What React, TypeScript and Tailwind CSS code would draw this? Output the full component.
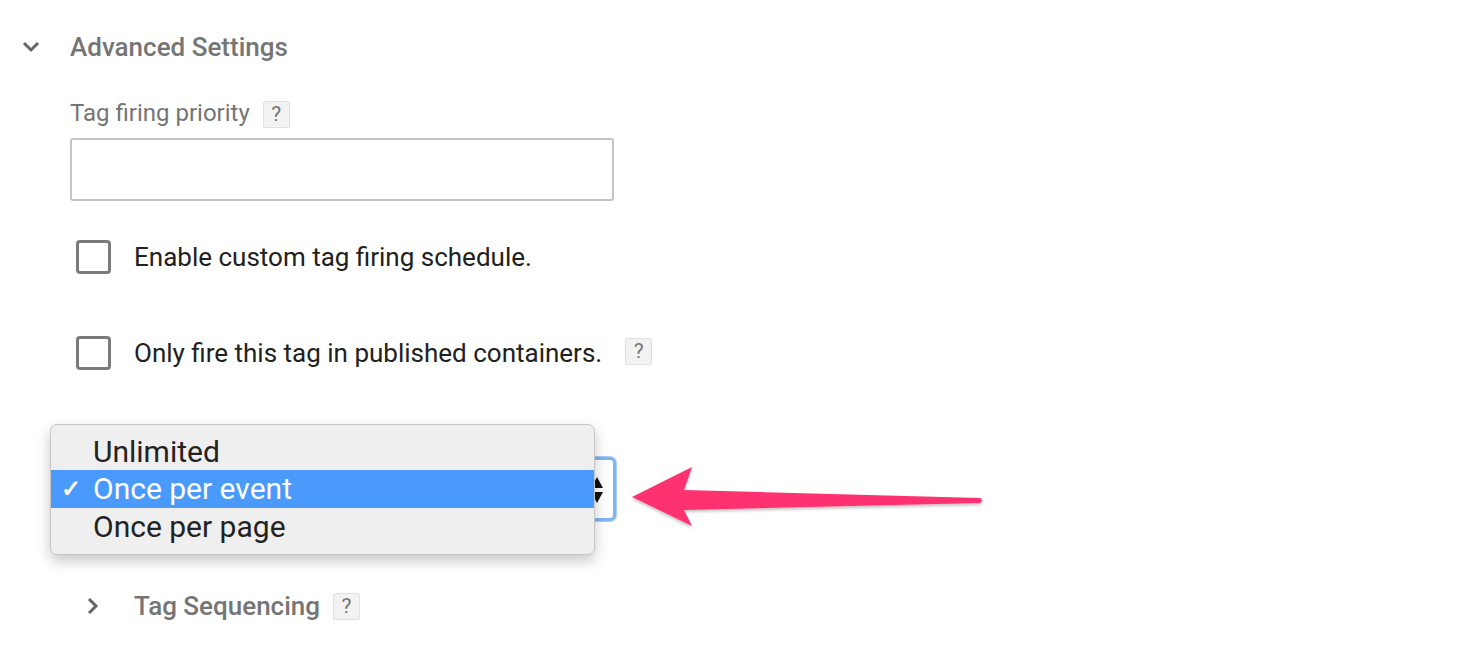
import React from 'react'

const Help = ({ className = '' }: { className?: string }) => (
    <span className={`inline-flex items-center justify-center w-[27px] h-[27px] bg-[#f2f2f2] border border-[#e0e0e0] rounded-[2px] text-[21px] text-[#757575] leading-none ${className}`}>
        ?
    </span>
)

const Checkbox = () => (
    <span className="inline-block w-[35px] h-[34px] border-[3px] border-[#7b7b7b] rounded-[4px] shrink-0" />
)

export default function App() {
    return (
        <div className="w-[1464px] h-[664px] bg-white overflow-hidden font-['Roboto',sans-serif] relative">
            <div className="pt-[33px] pl-[22px]">
                {/* Header */}
                <div className="flex items-center h-[28px]">
                    <svg width="18" height="12" viewBox="0 0 18 12" className="shrink-0">
                        <path d="M2 2 L9 9 L16 2" fill="none" stroke="#666" strokeWidth="3" />
                    </svg>
                    <span className="ml-[30px] text-[26px] font-medium text-[#757575]">Advanced Settings</span>
                </div>

                <div className="pl-[48px]">
                    {/* Tag firing priority */}
                    <div className="flex items-center mt-[37px] h-[30px]">
                        <span className="text-[24px] text-[#757575]">Tag firing priority</span>
                        <Help className="ml-[13px] mt-[3px]" />
                    </div>
                    <div className="mt-[10px] w-[544px] h-[63px] border-2 border-[#c4c4c4] rounded-[3px]" />

                    {/* Checkboxes */}
                    <div className="flex items-center mt-[38px] ml-[6px] h-[36px]">
                        <Checkbox />
                        <span className="ml-[23px] text-[26px] text-[#212121]">Enable custom tag firing schedule.</span>
                    </div>
                    <div className="flex items-center mt-[60px] ml-[6px] h-[36px]">
                        <Checkbox />
                        <span className="ml-[23px] text-[26px] text-[#212121]">Only fire this tag in published containers.</span>
                        <Help className="ml-[23px] -mt-[3px]" />
                    </div>

                    {/* Select with open menu */}
                    <div className="relative mt-[86px] w-[546px] h-[64px] border-[3px] border-[#7fb5f3] rounded-[6px] bg-white shadow-[0_0_0_1px_#a9cdf7]">
                        <svg width="14" height="30" viewBox="0 0 14 30" className="absolute right-[9px] top-[15px]">
                            <path d="M7 2 L13 13 L1 13 Z" fill="#111" />
                            <path d="M7 28 L13 17 L1 17 Z" fill="#111" />
                        </svg>
                        <div className="absolute left-[-23px] top-[-36px] w-[545px] h-[131px] bg-[#efefef] border border-[#c6c6c6] rounded-[7px] shadow-[0_6px_14px_rgba(0,0,0,0.22)] pt-[8px] text-[30px] text-[#222] leading-none">
                            <div className="h-[37px] flex items-center pl-[42px]">Unlimited</div>
                            <div className="h-[38px] flex items-center bg-[#4a9afb] text-white relative pl-[42px]">
                                <span className="absolute left-[10px] text-[24px] font-bold">✓</span>
                                Once per event
                            </div>
                            <div className="h-[38px] flex items-center pl-[42px]">Once per page</div>
                        </div>
                    </div>

                    {/* Tag Sequencing */}
                    <div className="flex items-center mt-[70px] h-[30px]">
                        <svg width="12" height="18" viewBox="0 0 12 18" className="ml-[17px] shrink-0">
                            <path d="M2 2 L9 9 L2 16" fill="none" stroke="#666" strokeWidth="3" />
                        </svg>
                        <span className="ml-[35px] text-[26px] font-medium text-[#757575]">Tag Sequencing</span>
                        <Help className="ml-[13px]" />
                    </div>
                </div>
            </div>

            {/* Annotation arrow */}
            <svg width="380" height="80" viewBox="0 0 380 80" className="absolute left-[620px] top-[458px]">
                <defs>
                    <filter id="sh" x="-10%" y="-20%" width="120%" height="160%">
                        <feDropShadow dx="0" dy="2" stdDeviation="1.5" floodColor="#000" floodOpacity="0.25" />
                    </filter>
                </defs>
                <path
                    d="M12 39 L72 9 L64 32 L360 40 Q364 42 360 45 L64 52 L72 68 Z"
                    fill="#fe3370"
                    filter="url(#sh)"
                />
            </svg>
        </div>
    )
}
